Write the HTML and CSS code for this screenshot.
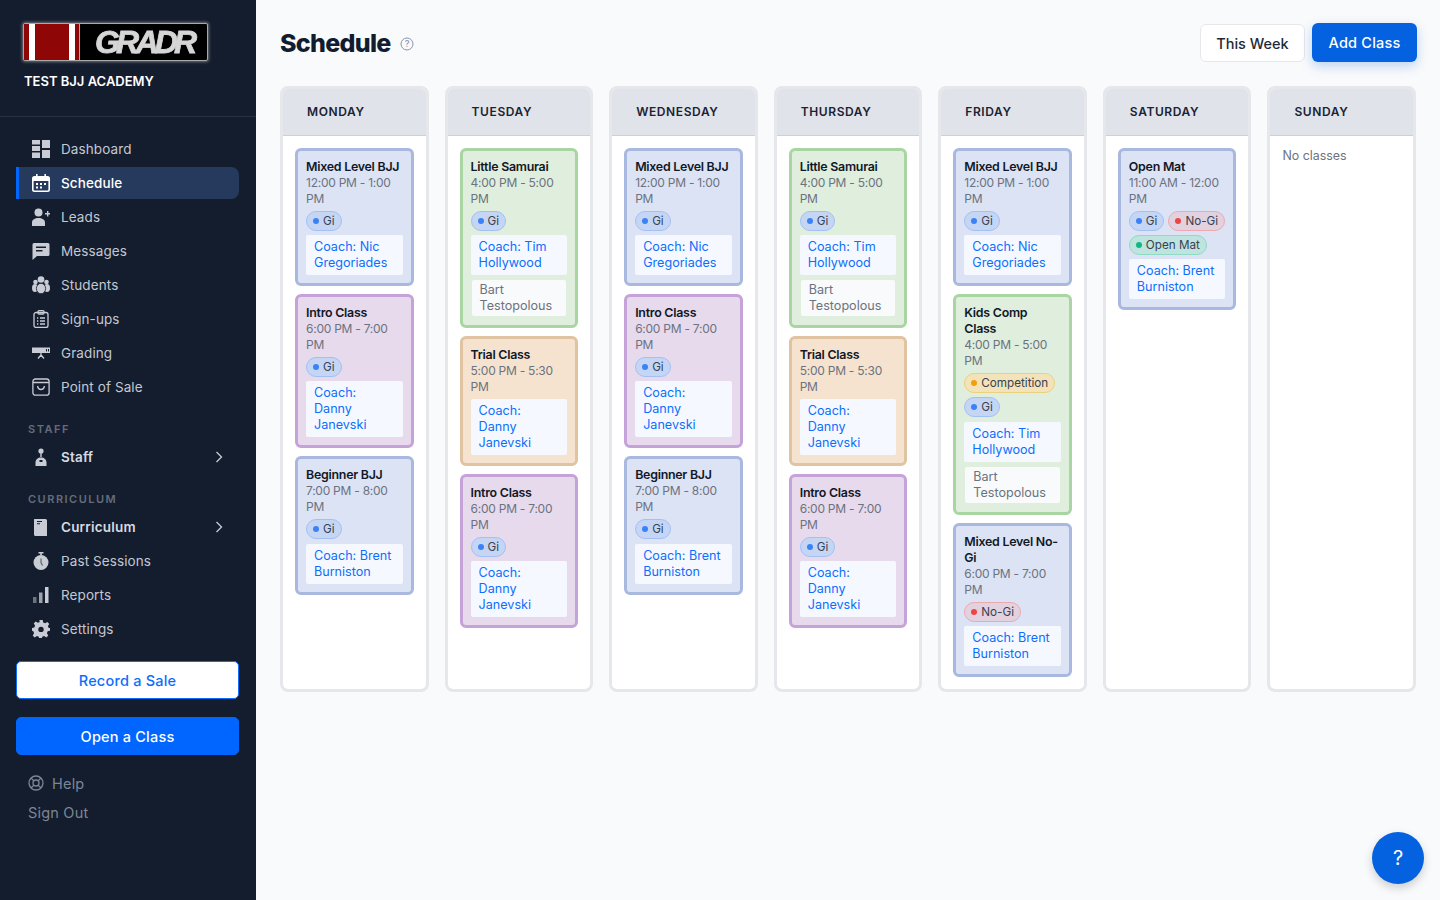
FILE: index.html
```html
<!DOCTYPE html>
<html lang="en">
<head>
<meta charset="utf-8">
<title>Schedule</title>
<link rel="stylesheet" href="styles.css">
</head>
<body>
<div class="app">
<aside class="sidebar">
  <div class="brand">
    <div class="logo">
      <span class="logo-red"><i class="stripe"></i><i class="stripe"></i></span>
      <span class="logo-black"><span class="logo-text">GRADR</span></span>
    </div>
    <div class="academy">TEST BJJ ACADEMY</div>
  </div>
  <nav class="nav">
    <a class="nav-item"><svg class="ico" viewBox="0 0 18 18"><path fill="currentColor" d="M0 0h8v4.500H0zM0 6h8v5H0zM0 12.500h8V18H0zM10 0h8v8h-8zM10 10h8v8h-8z"/></svg>Dashboard</a>
    <a class="nav-item active"><svg class="ico" viewBox="0 0 18 18"><path fill="currentColor" fill-rule="evenodd" d="M4 0h1.600v2h6.800V0H14v2h1.500A2.500 2.500 0 0 1 18 4.500v11a2.500 2.500 0 0 1-2.500 2.500h-13A2.500 2.500 0 0 1 0 15.500v-11A2.500 2.500 0 0 1 2.500 2H4zM1.600 7v8.500a1 1 0 0 0 1 1h12.800a1 1 0 0 0 1-1V7zM4 9h2v2H4zM8 9h2v2H8zM12 9h2v2h-2zM4 12.500h2v2H4zM8 12.500h2v2H8z"/></svg>Schedule</a>
    <a class="nav-item"><svg class="ico" viewBox="0 0 18 18"><circle fill="currentColor" cx="6.500" cy="4.500" r="4"/><path fill="currentColor" d="M0 18v-3.500C0 11.500 3 10 6.500 10s6.500 1.500 6.500 4.500V18zM13 5h2V3h1.400v2H18v1.500h-1.600v2H15v-2h-2z"/></svg>Leads</a>
    <a class="nav-item"><svg class="ico" viewBox="0 0 18 18"><path fill="currentColor" fill-rule="evenodd" d="M2 1h14a1.500 1.500 0 0 1 1.500 1.500v10A1.500 1.500 0 0 1 16 14H5l-4.500 4V2.500A1.500 1.500 0 0 1 2 1zM4 4.500v1.500h10V4.500zM4 8v1.500h6.500V8z"/></svg>Messages</a>
    <a class="nav-item"><svg class="ico" viewBox="0 0 18 18"><circle fill="currentColor" cx="9" cy="3.500" r="3.300"/><circle fill="currentColor" cx="3.500" cy="6" r="2.300"/><circle fill="currentColor" cx="14.500" cy="6" r="2.300"/><ellipse fill="currentColor" cx="3" cy="12" rx="3" ry="4"/><ellipse fill="currentColor" cx="15" cy="12" rx="3" ry="4"/><ellipse fill="currentColor" stroke="#141d2e" stroke-width=".8" cx="9" cy="12.500" rx="4.600" ry="5.200"/></svg>Students</a>
    <a class="nav-item"><svg class="ico" viewBox="0 0 18 18"><g fill="none" stroke="currentColor" stroke-width="1.300"><rect x="2" y="2.500" width="14" height="15" rx="2"/><rect x="6" y=".7" width="6" height="3.300" rx="1"/><path d="M8 8h5M8 11h5M8 14h5M5 8h1.300M5 11h1.300M5 14h1.300"/></g></svg>Sign-ups</a>
    <a class="nav-item"><svg class="ico" viewBox="0 0 18 18"><path fill="currentColor" fill-rule="evenodd" d="M0 3.500h18v5.500H0zM14 5v2.500h1V5zM16 5v2.500h1V5z"/><path fill="none" stroke="currentColor" stroke-width="1.300" d="M9 9v2M9 11l-3 3.500M9 11l3 3.500"/></svg>Grading</a>
    <a class="nav-item"><svg class="ico" viewBox="0 0 18 18"><g fill="none" stroke="currentColor" stroke-width="1.300"><rect x=".9" y="1" width="16.200" height="16.200" rx="2.500"/><path d="M1 4.500h16M5.500 8c.5 2.500 2 3.500 3.500 3.500s3-1 3.500-3.500"/></g></svg>Point of Sale</a>
  </nav>
  <div class="section-label label-staff">STAFF</div>
  <nav class="nav">
    <a class="nav-item strong"><svg class="ico" viewBox="0 0 18 18"><circle fill="currentColor" cx="9" cy="3" r="2.600"/><path fill="currentColor" d="M8.300 5h1.400v4h-1.400zM3.500 18v-3.500C3.500 11.500 6 9.500 9 9.500s5.500 2 5.500 5V18z"/><rect fill="#141d2e" x="7.500" y="12" width="3" height="2"/></svg>Staff<svg class="chev" viewBox="0 0 8 12"><path fill="none" stroke="currentColor" stroke-width="1.300" d="M1.500 1l5 5-5 5"/></svg></a>
  </nav>
  <div class="section-label label-curr">CURRICULUM</div>
  <nav class="nav">
    <a class="nav-item strong"><svg class="ico" viewBox="0 0 18 18"><path fill="currentColor" fill-rule="evenodd" d="M2.500 1h11A1.500 1.500 0 0 1 15 2.500v15a.5.500 0 0 1-.5.500h-11A1.500 1.500 0 0 1 2 16.500V1.500zM5 3v1h5V3zM5 5.300v1h3v-1z"/></svg>Curriculum<svg class="chev" viewBox="0 0 8 12"><path fill="none" stroke="currentColor" stroke-width="1.300" d="M1.500 1l5 5-5 5"/></svg></a>
    <a class="nav-item"><svg class="ico" viewBox="0 0 18 18"><circle fill="currentColor" cx="9" cy="10.500" r="7.500"/><path fill="currentColor" d="M6.500 0h5v1.500h-5zM8.200 1h1.600v2H8.200z"/><path fill="none" stroke="#5b6474" stroke-width="1.200" d="M9 6.500v4l1.500 3"/></svg>Past Sessions</a>
    <a class="nav-item"><svg class="ico" viewBox="0 0 18 18"><path fill="#6b7280" d="M1 11h3.500v6H1z"/><path fill="#9ca3af" d="M7 6.500h3.500V17H7z"/><path fill="currentColor" d="M13 1h3.500v16H13z"/></svg>Reports</a>
    <a class="nav-item"><svg class="ico" viewBox="0 0 18 18"><path fill="currentColor" fill-rule="evenodd" d="M7.300 0h3.400l.5 2.500 1.900.8 2.200-1.400 2 2-1.400 2.200.8 1.900L18 8v2.800l-2.300.5-.8 1.900 1.400 2.200-2 2-2.200-1.400-1.900.8-.5 2.500H7.300l-.5-2.500-1.900-.8-2.200 1.400-2-2 1.400-2.200-.8-1.900L0 10.800V8l2.300-.5.800-1.900L1.700 3.400l2-2 2.200 1.400 1.900-.8zM9 6.700a2.700 2.700 0 1 0 0 5.400 2.700 2.700 0 0 0 0-5.400z"/></svg>Settings</a>
  </nav>
  <div class="side-actions">
    <button class="btn-outline">Record a Sale</button>
    <button class="btn-solid">Open a Class</button>
  </div>
  <div class="side-foot">
    <a class="foot-link"><svg class="foot-ico" viewBox="0 0 16 16"><g fill="none" stroke="currentColor" stroke-width="1.300"><circle cx="8" cy="8" r="7"/><circle cx="8" cy="8" r="3"/><path d="M3 3l2.900 2.900M13 3l-2.900 2.900M3 13l2.900-2.900M13 13l-2.900-2.900"/></g></svg>Help</a>
    <a class="foot-link">Sign Out</a>
  </div>
</aside>

<main class="main">
  <header class="top">
    <div class="title-wrap">
      <h1 class="title">Schedule</h1>
      <svg class="q-ico" viewBox="0 0 14 14"><circle cx="7" cy="7" r="6" fill="none" stroke="#8b94ac" stroke-width="1"/><text x="7" y="10" text-anchor="middle" class="q-text">?</text></svg>
    </div>
    <div class="top-actions">
      <button class="btn-week">This Week</button>
      <button class="btn-add">Add Class</button>
    </div>
  </header>

  <section class="week">
    <div class="day">
      <div class="day-head">MONDAY</div>
      <div class="day-body">
        <article class="card blue"><h3>Mixed Level BJJ</h3><p class="time">12:00 PM - 1:00<br>PM</p><div class="tags"><span class="tag gi">Gi</span></div><div class="coach">Coach: Nic<br>Gregoriades</div></article>
        <article class="card purple"><h3>Intro Class</h3><p class="time">6:00 PM - 7:00<br>PM</p><div class="tags"><span class="tag gi">Gi</span></div><div class="coach">Coach:<br>Danny<br>Janevski</div></article>
        <article class="card blue"><h3>Beginner BJJ</h3><p class="time">7:00 PM - 8:00<br>PM</p><div class="tags tags-tall"><span class="tag gi">Gi</span></div><div class="coach">Coach: Brent<br>Burniston</div></article>
      </div>
    </div>
    <div class="day">
      <div class="day-head">TUESDAY</div>
      <div class="day-body">
        <article class="card green"><h3>Little Samurai</h3><p class="time">4:00 PM - 5:00<br>PM</p><div class="tags"><span class="tag gi">Gi</span></div><div class="coach">Coach: Tim<br>Hollywood</div><div class="asst">Bart<br>Testopolous</div></article>
        <article class="card orange"><h3>Trial Class</h3><p class="time">5:00 PM - 5:30<br>PM</p><div class="coach no-tags">Coach:<br>Danny<br>Janevski</div></article>
        <article class="card purple"><h3>Intro Class</h3><p class="time">6:00 PM - 7:00<br>PM</p><div class="tags"><span class="tag gi">Gi</span></div><div class="coach">Coach:<br>Danny<br>Janevski</div></article>
      </div>
    </div>
    <div class="day">
      <div class="day-head">WEDNESDAY</div>
      <div class="day-body">
        <article class="card blue"><h3>Mixed Level BJJ</h3><p class="time">12:00 PM - 1:00<br>PM</p><div class="tags"><span class="tag gi">Gi</span></div><div class="coach">Coach: Nic<br>Gregoriades</div></article>
        <article class="card purple"><h3>Intro Class</h3><p class="time">6:00 PM - 7:00<br>PM</p><div class="tags"><span class="tag gi">Gi</span></div><div class="coach">Coach:<br>Danny<br>Janevski</div></article>
        <article class="card blue"><h3>Beginner BJJ</h3><p class="time">7:00 PM - 8:00<br>PM</p><div class="tags tags-tall"><span class="tag gi">Gi</span></div><div class="coach">Coach: Brent<br>Burniston</div></article>
      </div>
    </div>
    <div class="day">
      <div class="day-head">THURSDAY</div>
      <div class="day-body">
        <article class="card green"><h3>Little Samurai</h3><p class="time">4:00 PM - 5:00<br>PM</p><div class="tags"><span class="tag gi">Gi</span></div><div class="coach">Coach: Tim<br>Hollywood</div><div class="asst">Bart<br>Testopolous</div></article>
        <article class="card orange"><h3>Trial Class</h3><p class="time">5:00 PM - 5:30<br>PM</p><div class="coach no-tags">Coach:<br>Danny<br>Janevski</div></article>
        <article class="card purple"><h3>Intro Class</h3><p class="time">6:00 PM - 7:00<br>PM</p><div class="tags"><span class="tag gi">Gi</span></div><div class="coach">Coach:<br>Danny<br>Janevski</div></article>
      </div>
    </div>
    <div class="day">
      <div class="day-head">FRIDAY</div>
      <div class="day-body">
        <article class="card blue"><h3>Mixed Level BJJ</h3><p class="time">12:00 PM - 1:00<br>PM</p><div class="tags"><span class="tag gi">Gi</span></div><div class="coach">Coach: Nic<br>Gregoriades</div></article>
        <article class="card green"><h3>Kids Comp<br>Class</h3><p class="time">4:00 PM - 5:00<br>PM</p><div class="tags tags-tall"><span class="tag comp">Competition</span><span class="tag gi">Gi</span></div><div class="coach">Coach: Tim<br>Hollywood</div><div class="asst">Bart<br>Testopolous</div></article>
        <article class="card blue"><h3>Mixed Level No-<br>Gi</h3><p class="time">6:00 PM - 7:00<br>PM</p><div class="tags"><span class="tag nogi">No-Gi</span></div><div class="coach">Coach: Brent<br>Burniston</div></article>
      </div>
    </div>
    <div class="day">
      <div class="day-head">SATURDAY</div>
      <div class="day-body">
        <article class="card blue"><h3>Open Mat</h3><p class="time">11:00 AM - 12:00<br>PM</p><div class="tags"><span class="tag gi">Gi</span><span class="tag nogi">No-Gi</span><span class="tag open">Open Mat</span></div><div class="coach">Coach: Brent<br>Burniston</div></article>
      </div>
    </div>
    <div class="day">
      <div class="day-head">SUNDAY</div>
      <div class="day-body"><p class="empty">No classes</p></div>
    </div>
  </section>
  <button class="help-bubble">?</button>
</main>
</div>
</body>
</html>
```
FILE: styles.css
```css
* { box-sizing: border-box; }
html, body { margin: 0; height: 100%; }
body { font-family: Inter, "Noto Sans", sans-serif; background: #f9fafb; color: #111827; overflow: hidden; }
a { text-decoration: none; }
button { font-family: inherit; cursor: pointer; }
.app { display: flex; height: 900px; }

.sidebar { width: 256px; flex: none; background: #141d2e; display: flex; flex-direction: column; }
.brand { height: 117px; padding: 23px 24px 0 23px; border-bottom: 1px solid #283142; }
.logo { display: flex; width: 185px; height: 38px; border: 1px solid #a9a9a9; box-shadow: 0 0 3px 1px rgba(200,200,200,.5); border-radius: 2px; overflow: hidden; background: #000; }
.logo-red { width: 56px; flex: none; background: #8f0606; display: flex; gap: 34px; padding-left: 5px; border-right: 1px solid #a9a9a9; }
.stripe { width: 6px; background: #fff; }
.logo-black { flex: 1; display: flex; align-items: center; padding-left: 15px; }
.logo-text { font-family: "Liberation Sans", sans-serif; font-weight: 700; font-style: italic; font-size: 32px; letter-spacing: -3.8px; line-height: 36px; color: #d6d6d6; -webkit-text-stroke: .8px #d6d6d6; filter: blur(.7px); }
.academy { margin: 12px 0 0 1px; font-size: 13px; line-height: 16px; font-weight: 600; color: #fff; white-space: nowrap; }

.nav { display: flex; flex-direction: column; gap: 2px; padding: 0 17px 0 16px; }
.sidebar > .nav:first-of-type { margin-top: 16px; }
.nav-item { height: 32px; display: flex; align-items: center; padding-left: 16px; font-size: 13.5px; color: #c3c8d2; border-radius: 0 8px 8px 0; letter-spacing: .1px; }
.nav-item.active { background: #263a5e; border-left: 3px solid #0066ff; padding-left: 13px; color: #fff; font-weight: 500; }
.nav-item.strong { font-weight: 600; color: #d7dae0; letter-spacing: .2px; }
.ico { width: 18px; height: 18px; margin-right: 11px; flex: none; color: #c9ccd4; }
.active .ico { color: #fff; }
.chev { width: 8px; height: 12px; margin-left: auto; margin-right: 16px; color: #c9ccd4; }

.section-label { padding-left: 28px; font-size: 11px; line-height: 14px; font-weight: 600; letter-spacing: 1.5px; color: #646c7b; }
.label-staff { margin-top: 19px; margin-bottom: 5px; }
.label-curr { margin-top: 19px; margin-bottom: 5px; }

.side-actions { display: flex; flex-direction: column; gap: 18px; margin: 16px 17px 0 16px; }
.btn-outline, .btn-solid { height: 38px; border-radius: 5px; font-size: 14.5px; letter-spacing: .2px; font-weight: 500; }
.btn-outline { background: #fff; color: #0d6efd; border: 1px solid #0d6efd; }
.btn-solid { background: #0066ff; color: #fff; border: 1px solid #0066ff; }

.side-foot { display: flex; flex-direction: column; gap: 8px; padding: 17px 0 0 28px; }
.foot-link { display: flex; align-items: center; height: 22px; font-size: 14.5px; color: #7e8694; letter-spacing: .2px; }
.foot-link + .foot-link { margin-top: -1px; }
.foot-ico { width: 16px; height: 16px; margin-right: 8px; }

.main { flex: 1; padding: 0 24px; position: relative; min-width: 0; }
.top { height: 86px; display: flex; justify-content: space-between; align-items: center; }
.title-wrap { display: flex; align-items: center; gap: 9px; }
.title { margin: 0; font-size: 25px; line-height: 32px; font-weight: 800; color: #111c30; letter-spacing: -.7px; }
.q-ico { width: 14px; height: 14px; margin-top: 2px; }
.q-text { font-size: 9px; font-weight: 500; fill: #8b94ac; }
.top-actions { display: flex; gap: 7px; align-items: center; margin-right: -1px; }
.btn-week { width: 105px; height: 38px; background: #fff; border: 1px solid #e5e7eb; border-radius: 6px; font-size: 14.5px; font-weight: 500; color: #1f2937; }
.btn-add { width: 105px; height: 39px; background: #0461e0; border: 0; border-radius: 6px; font-size: 14.5px; letter-spacing: .2px; font-weight: 500; color: #fff; box-shadow: 0 4px 12px rgba(4,97,224,.25); transform: translateY(-1px); }

.week { display: grid; grid-template-columns: repeat(7, minmax(0, 1fr)); gap: 16px; }
.day { height: 606px; border: 3px solid #e5e7eb; border-radius: 8px; background: #fff; overflow: hidden; display: flex; flex-direction: column; }
.day-head { flex: none; background: #e0e3ea; border-bottom: 1px solid #cdd0d8; margin: -3px -3px 0; height: 50px; padding: 18px 0 0 27px; font-size: 12px; line-height: 16px; font-weight: 600; letter-spacing: .6px; color: #1a2233; }
.day-body { flex: 1; padding: 12px 12px 0; display: flex; flex-direction: column; gap: 8px; }
.card { border: 3px solid; border-radius: 6px; padding: 8px; font-size: 13px; line-height: 16px; }
.card h3 { margin: 0; font-size: 12.4px; line-height: 16px; font-weight: 600; letter-spacing: -.25px; color: #111827; white-space: nowrap; }
.time { margin: 0; font-size: 12px; letter-spacing: -.25px; color: #6b7280; white-space: nowrap; }
.tags { display: flex; flex-wrap: wrap; gap: 4px; margin: 4px 0; }
.tags-tall { margin-bottom: 5px; }
.tag { display: inline-flex; align-items: center; height: 20px; padding: 0 6px; border: 1px solid; border-radius: 10px; font-size: 11.7px; color: #374151; white-space: nowrap; }
.tag::before { content: ""; width: 6px; height: 6px; border-radius: 50%; margin-right: 4px; flex: none; }
.gi { background: #c5d6f5; border-color: #a3c0f5; }
.gi::before { background: #3b82f6; }
.nogi { background: #e2d2e0; border-color: #eba9b0; }
.nogi::before { background: #ef4444; }
.open { background: #bfe3de; border-color: #90d9c4; }
.open::before { background: #10b981; }
.comp { background: #f3e3b8; border-color: #ecd07f; }
.comp::before { background: #f59e0b; }
.coach { background: #f5f9ff; border-radius: 2px; padding: 4px 8px; font-size: 12.6px; color: #0d6efd; white-space: nowrap; }
.no-tags { margin-top: 4px; }
.asst { background: #f9fafb; border-radius: 2px; margin: 5px 1px 1px; padding: 2px 8px 2px; font-size: 12.6px; color: #6b7280; white-space: nowrap; }
.blue { background: #dce3f4; border-color: #a8b8de; }
.green { background: #dfeedd; border-color: #a8d5a2; }
.purple { background: #e7daec; border-color: #c5a3d8; }
.orange { background: #f5e3cf; border-color: #e0c3a0; }
.empty { margin: 0; font-size: 12.4px; line-height: 16px; color: #6b7280; }
.help-bubble { position: absolute; right: 16px; bottom: 16px; width: 52px; height: 52px; border-radius: 50%; border: 0; background: #0461e0; color: #fff; font-size: 20px; box-shadow: 0 4px 10px rgba(0,0,0,.18); }
```
